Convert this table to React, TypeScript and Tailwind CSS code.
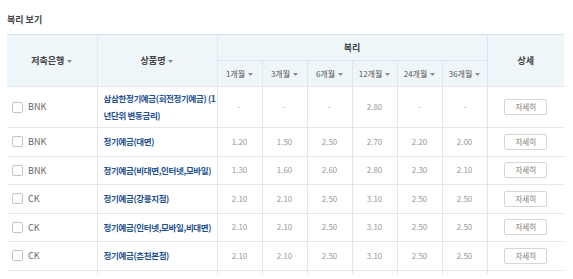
import React from "react";

const months = ["1개월", "3개월", "6개월", "12개월", "24개월", "36개월"];

interface Row {
  bank: string;
  name: string[];
  rates: string[];
}

const rows: Row[] = [
  { bank: "BNK", name: ["삼삼한정기예금(회전정기예금) (1", "년단위 변동금리)"], rates: ["-", "-", "-", "2.80", "-", "-"] },
  { bank: "BNK", name: ["정기예금(대면)"], rates: ["1.20", "1.50", "2.50", "2.70", "2.20", "2.00"] },
  { bank: "BNK", name: ["정기예금(비대면,인터넷,모바일)"], rates: ["1.30", "1.60", "2.60", "2.80", "2.30", "2.10"] },
  { bank: "CK", name: ["정기예금(강릉지점)"], rates: ["2.10", "2.10", "2.50", "3.10", "2.50", "2.50"] },
  { bank: "CK", name: ["정기예금(인터넷,모바일,비대면)"], rates: ["2.10", "2.10", "2.50", "3.10", "2.50", "2.50"] },
  { bank: "CK", name: ["정기예금(춘천본점)"], rates: ["2.10", "2.10", "2.50", "3.10", "2.50", "2.50"] },
];

const Caret = () => (
  <svg width="5" height="3" viewBox="0 0 5 3" className="inline-block ml-[3px] align-middle">
    <path d="M0 0h5L2.5 3z" fill="#888" />
  </svg>
);

export default function App() {
  return (
    <div
      className="w-[573px] h-[279px] bg-white text-[9px] text-[#555]"
      style={{ fontFamily: '"Noto Sans CJK KR", "Noto Sans", sans-serif' }}
    >
      <div className="pl-[7px] pt-[13px] h-[34px] font-bold text-[#444] leading-[14px]">복리 보기</div>

      <div className="ml-[7px] w-[557px]">
        <table className="w-[557px] table-fixed border-collapse">
          <colgroup>
            <col className="w-[90px]" />
            <col className="w-[120px]" />
            {months.map((m) => (
              <col key={m} className="w-[45px]" />
            ))}
            <col className="w-[77px]" />
          </colgroup>
          <thead>
            <tr className="h-[26px] bg-[#eef6fa] border-t border-[#cfe2f1]">
              <th rowSpan={2} className="font-bold text-[#444] border-r border-[#d9e8f3]">
                저축은행
                <Caret />
              </th>
              <th rowSpan={2} className="font-bold text-[#444] border-r border-[#d9e8f3]">
                상품명
                <Caret />
              </th>
              <th colSpan={6} className="font-bold text-[#444] border-r border-b border-[#d9e8f3]">
                복리
              </th>
              <th rowSpan={2} className="font-bold text-[#444]">
                상세
              </th>
            </tr>
            <tr className="h-[26px] bg-[#eef6fa]">
              {months.map((m) => (
                <th key={m} className="font-normal text-[8px] text-[#555] border-r border-[#d9e8f3]">
                  {m}
                  <Caret />
                </th>
              ))}
            </tr>
          </thead>
          <tbody>
            {rows.map((r, i) => (
              <tr key={i} className={`${i === 0 ? "h-[41px]" : "h-[28.5px]"} border-t border-[#e6e6e6]`}>
                <td className="border-r border-[#e6e6e6] pl-[5px]">
                  <div className="flex items-center">
                    <span className="w-[11px] h-[11px] border border-[#c4c4c4] rounded-[2px] bg-white" />
                    <span className="ml-[5px] text-[#666]">{r.bank}</span>
                  </div>
                </td>
                <td className="border-r border-[#e6e6e6] pl-[6px] pr-0 font-bold text-[8.5px] tracking-[-0.35px] text-[#23508f] leading-[17px] whitespace-nowrap">
                  {r.name.map((line, k) => (
                    <div key={k}>{line}</div>
                  ))}
                </td>
                {r.rates.map((v, j) => (
                  <td key={j} className="border-r border-[#e6e6e6] text-center text-[8px] text-[#999]">
                    {v}
                  </td>
                ))}
                <td className="text-center">
                  <button className="w-[43px] h-[16px] border border-[#d6d6d6] rounded-[2px] bg-white text-[7.5px] text-[#777] leading-[14px]">
                    자세히
                  </button>
                </td>
              </tr>
            ))}
            <tr className="h-[4px] border-t border-[#e6e6e6]">
              {Array.from({ length: 8 }).map((_, j) => (
                <td key={j} className="border-r border-[#e6e6e6]" />
              ))}
              <td />
            </tr>
          </tbody>
        </table>
      </div>
    </div>
  );
}
